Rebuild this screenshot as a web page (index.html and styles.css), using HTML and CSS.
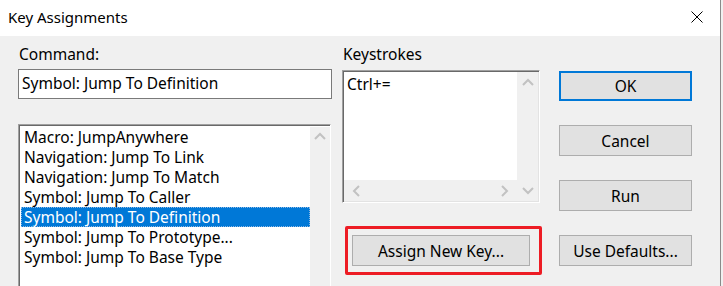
FILE: index.html
```html
<!DOCTYPE html>
<html lang="en">

<head>
    <meta charset="UTF-8">
    <title>Key Assignments</title>
    <link rel="stylesheet" href="styles.css">
</head>

<body>
    <div class="window">
        <div class="titlebar">
            <span class="title">Key Assignments</span>
            <svg class="close" width="12" height="12" viewBox="0 0 12 12">
                <path d="M0.5 0.5 L11.5 11.5 M11.5 0.5 L0.5 11.5" stroke="#000" stroke-width="1" fill="none"/>
            </svg>
        </div>
        <div class="content">
            <div class="col-left">
                <div class="label">Command:</div>
                <div class="textbox">Symbol: Jump To Definition</div>
                <div class="listbox">
                    <ul class="items">
                        <li>Macro: JumpAnywhere</li>
                        <li>Navigation: Jump To Link</li>
                        <li>Navigation: Jump To Match</li>
                        <li>Symbol: Jump To Caller</li>
                        <li class="selected">Symbol: Jump To Definition</li>
                        <li>Symbol: Jump To Prototype...</li>
                        <li>Symbol: Jump To Base Type</li>
                    </ul>
                    <div class="vscroll">
                        <svg width="12" height="8" viewBox="0 0 12 8"><path d="M1 7 L6 2 L11 7" stroke="#c2c2c2" stroke-width="2" fill="none"/></svg>
                    </div>
                </div>
            </div>
            <div class="col-mid">
                <div class="label">Keystrokes</div>
                <div class="keybox">
                    <div class="keytext">Ctrl+=</div>
                    <div class="vscroll">
                        <svg width="12" height="8" viewBox="0 0 12 8"><path d="M1 7 L6 2 L11 7" stroke="#c2c2c2" stroke-width="2" fill="none"/></svg>
                        <svg width="12" height="8" viewBox="0 0 12 8"><path d="M1 1 L6 6 L11 1" stroke="#c2c2c2" stroke-width="2" fill="none"/></svg>
                    </div>
                    <div class="hscroll">
                        <svg width="8" height="12" viewBox="0 0 8 12"><path d="M7 1 L2 6 L7 11" stroke="#c2c2c2" stroke-width="2" fill="none"/></svg>
                        <svg width="8" height="12" viewBox="0 0 8 12"><path d="M1 1 L6 6 L1 11" stroke="#c2c2c2" stroke-width="2" fill="none"/></svg>
                    </div>
                </div>
                <div class="highlight">
                    <button class="btn btn-wide">Assign New Key...</button>
                </div>
            </div>
            <div class="col-right">
                <button class="btn btn-default">OK</button>
                <button class="btn">Cancel</button>
                <button class="btn">Run</button>
                <button class="btn">Use Defaults...</button>
            </div>
        </div>
    </div>
</body>

</html>
```

FILE: styles.css
```css
* {
    box-sizing: border-box;
}

body {
    margin: 0;
    font-family: "Noto Sans", "Open Sans", sans-serif;
    font-size: 15.5px;
    color: #000;
    background-color: #f0f0f0;
    overflow: hidden;
}

.window {
    width: 721px;
    height: 286px;
    border-right: 1px solid #8a8a8a;
    background-color: #f0f0f0;
    overflow: hidden;
}

.titlebar {
    height: 36px;
    background-color: #fff;
    display: flex;
    align-items: center;
    justify-content: space-between;
    padding: 0 17px 2px 8px;
}

.title {
    font-size: 15px;
}

.content {
    display: flex;
    padding-left: 18px;
}

.label {
    height: 20px;
    line-height: 20px;
    margin-top: 8px;
    padding-left: 1px;
}

/* left column */
.col-left {
    width: 314px;
    flex-shrink: 0;
}

.textbox {
    margin-top: 5px;
    height: 30px;
    line-height: 27px;
    padding-left: 3px;
    background-color: #fff;
    border: 1px solid #7a7a7a;
}

.listbox {
    margin-top: 25px;
    height: 170px;
    width: 313px;
    display: flex;
    background-color: #fff;
    border-top: 1px solid #a0a0a0;
    border-left: 1px solid #a0a0a0;
    border-right: 1px solid #fff;
    box-shadow: inset 1px 1px 0 #696969;
    padding: 2px 0 0 2px;
}

.items {
    list-style: none;
    margin: 0;
    padding: 0;
    flex: 1;
}

.items li {
    height: 20px;
    line-height: 20px;
    padding-left: 3px;
    white-space: nowrap;
}

.items li.selected {
    background-color: #0078d7;
    color: #fff;
    outline: 1px dotted #8cb8e4;
    outline-offset: -1px;
}

.vscroll {
    width: 20px;
    background-color: #f0f0f0;
    display: flex;
    flex-direction: column;
    justify-content: space-between;
    align-items: center;
    padding: 5px 0;
}

/* middle column */
.col-mid {
    margin-left: 10px;
    width: 198px;
    flex-shrink: 0;
}

.keybox {
    margin-top: 6px;
    width: 198px;
    height: 133px;
    display: grid;
    grid-template-columns: 1fr 21px;
    grid-template-rows: 1fr 21px;
    background-color: #fff;
    border-top: 1px solid #a0a0a0;
    border-left: 1px solid #a0a0a0;
    border-right: 1px solid #fff;
    border-bottom: 1px solid #fff;
    box-shadow: inset 1px 1px 0 #696969, inset -1px -1px 0 #e3e3e3;
    padding: 1px;
}

.keytext {
    padding: 2px 0 0 3px;
    line-height: 20px;
}

.keybox .vscroll {
    width: 21px;
    grid-row: 1 / 3;
    grid-column: 2;
    padding: 6px 0 6px;
}

.hscroll {
    grid-row: 2;
    grid-column: 1;
    background-color: #f0f0f0;
    display: flex;
    justify-content: space-between;
    align-items: center;
    padding: 0 8px;
}

.highlight {
    margin-top: 23px;
    margin-left: 3px;
    width: 197px;
    height: 49px;
    border: 3px solid #ed1c24;
    border-radius: 2px;
    padding: 6px 0 0 4px;
}

/* buttons */
.btn {
    font-family: inherit;
    font-size: 15.5px;
    color: #000;
    height: 31px;
    background-color: #e1e1e1;
    border: 1px solid #adadad;
    padding: 0;
}

.btn-wide {
    width: 178px;
}

.col-right {
    margin-left: 19px;
    margin-top: 35px;
    width: 133px;
    flex-shrink: 0;
    display: flex;
    flex-direction: column;
    gap: 24px;
}

.col-right .btn {
    width: 133px;
}

.btn-default {
    height: 30px;
    border: 2px solid #0078d7;
}

.close {
    display: block;
}
```
